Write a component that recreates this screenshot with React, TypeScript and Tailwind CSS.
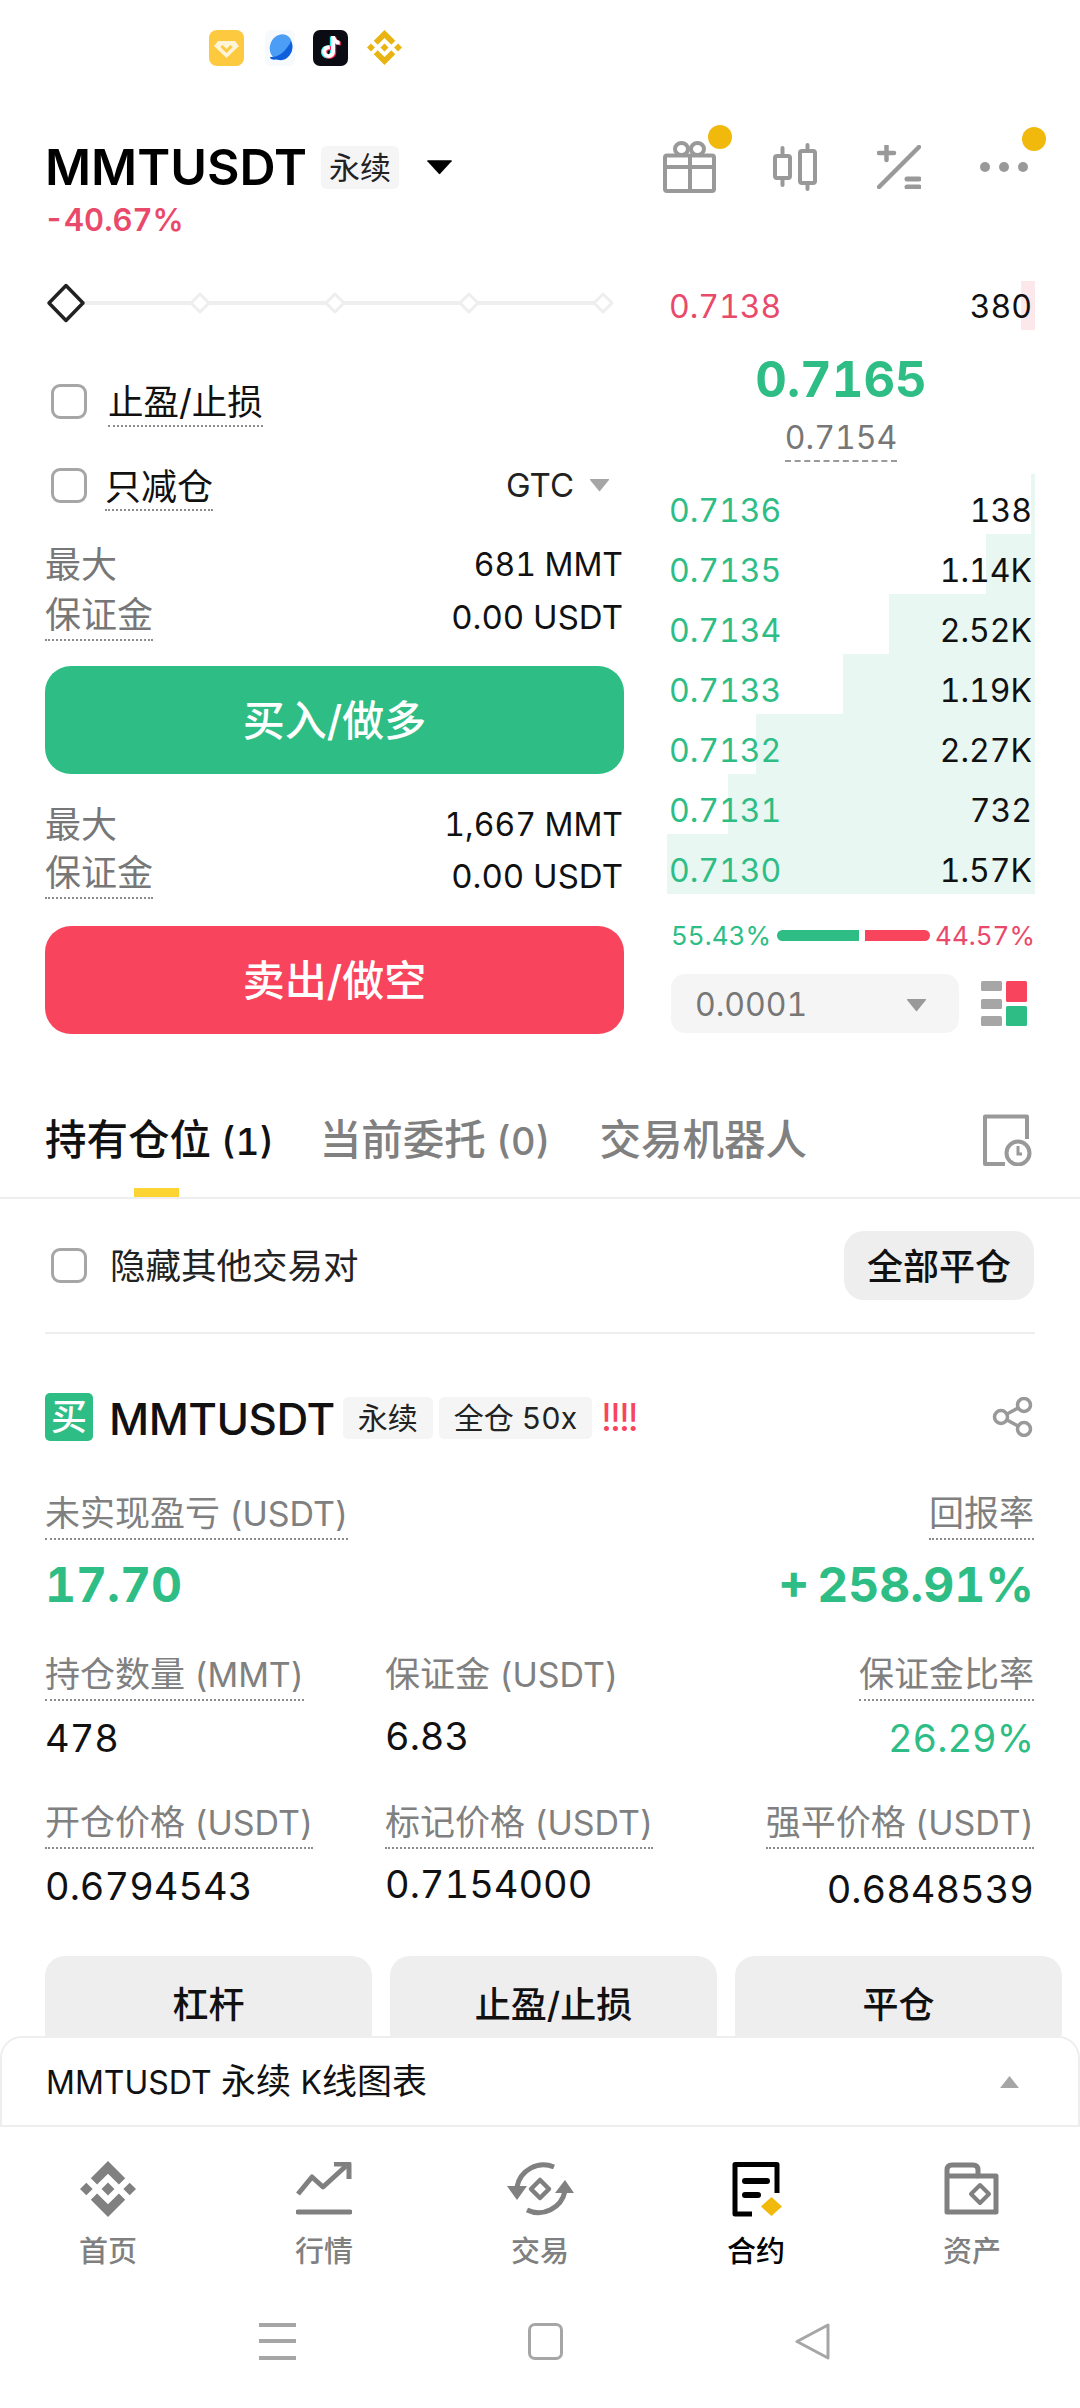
import type { ReactNode } from 'react'

const BOOK = [
  { price: '0.7136', size: '138', depth: 4 },
  { price: '0.7135', size: '1.14K', depth: 49 },
  { price: '0.7134', size: '2.52K', depth: 146 },
  { price: '0.7133', size: '1.19K', depth: 192 },
  { price: '0.7132', size: '2.27K', depth: 279 },
  { price: '0.7131', size: '732', depth: 307 },
  { price: '0.7130', size: '1.57K', depth: 368 },
]

const NAV = [
  { label: '首页', icon: <HomeIcon /> },
  { label: '行情', icon: <MarketIcon /> },
  { label: '交易', icon: <TradeIcon /> },
  { label: '合约', icon: <FuturesIcon />, active: true },
  { label: '资产', icon: <WalletIcon /> },
]

function BinanceLogo({ size, color }: { size: number; color: string }) {
  return (
    <svg width={size} height={size} viewBox="0 0 126.6 126.6" fill={color}>
      <path d="m38.73 53.2 24.59-24.58 24.6 24.6 14.3-14.31L63.32 0 24.43 38.9zM0 63.31l14.3-14.31 14.31 14.31-14.31 14.3zM38.73 73.41l24.59 24.59 24.6-24.6 14.31 14.29-38.9 38.91-38.91-38.88-.02-.02zM98 63.31l14.3-14.31 14.31 14.3-14.31 14.32z" />
      <path d="m77.83 63.3-14.51-14.52-10.73 10.73-1.24 1.23-2.54 2.54 14.51 14.5 14.51-14.47z" />
    </svg>
  )
}

function HomeIcon() {
  return <BinanceLogo size={56} color="#808080" />
}

function MarketIcon() {
  return (
    <svg width="56" height="54" viewBox="296 2165 56 54" fill="none" stroke="#808080" strokeWidth="5" strokeLinejoin="round">
      <path d="M298 2197 L312 2180 L323 2190 L346 2169" />
      <path d="M334 2167 H349 V2182" />
      <path d="M298 2215 H350" strokeLinecap="round" />
    </svg>
  )
}

function TradeIcon() {
  return (
    <svg width="68" height="56" viewBox="506 2162 68 56" fill="none" stroke="#808080" strokeWidth="5">
      <path d="M554 2168 A27 27 0 0 0 517 2188" />
      <path d="M527 2211 A27 27 0 0 0 565 2192" />
      <path d="M507 2187 H527 L517 2201 Z" fill="#808080" stroke="none" />
      <path d="M555 2194 H574 L565 2181 Z" fill="#808080" stroke="none" />
      <path d="M540 2181 L549 2190 L540 2199 L531 2190 Z" strokeWidth="4.5" strokeLinejoin="round" />
    </svg>
  )
}

function FuturesIcon() {
  return (
    <svg width="51" height="56" viewBox="731 2162 51 56" fill="none" stroke="#000">
      <path d="M777 2194 V2165.5 H735 V2215 H752" strokeWidth="5" strokeLinejoin="round" />
      <path d="M745 2182 H767 M745 2196 H758" strokeWidth="6" strokeLinecap="round" />
      <path d="M771.5 2198 L782 2207.5 L771.5 2217 L761 2207.5 Z" fill="#f0b90b" stroke="none" />
    </svg>
  )
}

function WalletIcon() {
  return (
    <svg width="56" height="54" viewBox="945 2164 56 54" fill="none" stroke="#808080" strokeWidth="5" strokeLinejoin="round">
      <path d="M948 2214 V2172 Q948 2167 953 2167 H974 Q979 2167 979 2172 V2178 H997 V2214 Z" />
      <path d="M948 2178 H979" />
      <path d="M981 2187 L990 2196 L981 2205 L972 2196 Z" strokeWidth="4" />
    </svg>
  )
}

function Triangle({ w, h, color, up }: { w: number; h: number; color: string; up?: boolean }) {
  return (
    <svg width={w} height={h} viewBox="0 0 20 14" preserveAspectRatio="none" fill={color}>
      <path d={up ? 'M10 1 L19 13 H1 Z' : 'M1.5 1 H18.5 Q19.5 1 19 2 L10.5 13 Q10 13.5 9.5 13 L1 2 Q.5 1 1.5 1 Z'} />
    </svg>
  )
}

function Checkbox() {
  return <span className="block w-[36px] h-[35px] shrink-0 rounded-[9px] border-[3px] border-[#a6a6a6]" />
}

function Dotted({ children, className = '' }: { children: ReactNode; className?: string }) {
  return <span className={`inline-block border-b-2 border-dotted border-[#8c8c8c] ${className}`}>{children}</span>
}

function Tag({ children }: { children: ReactNode }) {
  return (
    <span className="flex items-center h-[42px] px-[15px] rounded-[5px] bg-[#f5f5f5] text-[30px] leading-none text-[#222]">
      {children}
    </span>
  )
}

function MaxRow({ max, first }: { max: string; first?: boolean }) {
  return (
    <div className={first ? 'mt-[25px]' : 'mt-[26px]'}>
      <div className="flex justify-between items-center h-[50px] text-[36px] text-[#777]">
        <span>最大</span>
        <span className="text-[32px] text-[#111] pr-[1px]">{max}</span>
      </div>
      <div className={`flex justify-between items-start h-[50px] ${first ? 'mt-[2px]' : ''}`}>
        <Dotted className="text-[36px] leading-[46px] h-[49px] text-[#777]">保证金</Dotted>
        <span className={`text-[33px] text-[#111] pr-[1px] ${first ? 'leading-[50px]' : 'leading-[52px]'}`}>0.00 USDT</span>
      </div>
    </div>
  )
}

function Label({ text, unit }: { text: string; unit?: string }) {
  return (
    <>
      {text}
      {unit && <span className="text-[34px]"> {unit}</span>}
    </>
  )
}

function Stat({
  label,
  unit,
  value,
  right,
  plain,
  valueClass = 'text-[#111]',
  offset = 0,
}: {
  label: string
  unit?: string
  value: string
  right?: boolean
  plain?: boolean
  valueClass?: string
  offset?: number
}) {
  return (
    <div className={`flex flex-col ${right ? 'items-end' : 'items-start'}`}>
      {plain ? (
        <span className="text-[35px] leading-[46px] h-[50px] text-[#808080]">
          <Label text={label} unit={unit} />
        </span>
      ) : (
        <Dotted className="text-[35px] leading-[46px] h-[50px] text-[#808080]">
          <Label text={label} unit={unit} />
        </Dotted>
      )}
      <span className={`text-[38px] leading-[50px] ${valueClass} ${offset === -2 ? 'mt-[10px]' : offset === 3 ? 'mt-[15px]' : 'mt-[12px]'}`}>
        {value}
      </span>
    </div>
  )
}

export default function App() {
  return (
    <div className="w-[1080px] h-[2408px] flex flex-col overflow-hidden bg-white text-black tabular-nums font-['Inter','Noto_Sans_CJK_SC',sans-serif]">
      <div className="flex-1 min-h-0 overflow-hidden">
        {/* Status bar */}
        <div className="h-[90px] pl-[209px] pt-[30px] flex items-start">
          <svg width="35" height="36" viewBox="0 0 35 36">
            <rect width="35" height="36" rx="8" fill="#fdc93f" />
            <path d="M9 11 H26 L30 16 L17.5 28 L5 16 Z" fill="#fff4d6" />
            <path d="M12.5 16 L17.5 21 L22.5 16" fill="none" stroke="#fdc93f" strokeWidth="3" />
          </svg>
          <svg className="ml-[21px]" width="30" height="36" viewBox="0 0 30 36">
            <rect width="30" height="36" rx="6" fill="#f7fafd" />
            <ellipse cx="16" cy="17" rx="11" ry="13" fill="#4c9df5" transform="rotate(20 16 17)" />
            <path d="M26 11 A12 13 0 0 1 12 29.5 C7 30 5 29 5 27 C14 28 22 20 26 11 Z" fill="#0f5fdc" />
          </svg>
          <svg className="ml-[18px]" width="35" height="36" viewBox="0 0 35 36">
            <rect width="35" height="36" rx="7" fill="#0b0b14" />
            <g transform="translate(-1.2 .4)" fill="#25f4ee">
              <path d="M18 6h4c.3 2.6 2 4.4 4.6 4.7v4c-1.8 0-3.3-.5-4.6-1.4v8.2c0 4-3 6.5-6.3 6.5-3.7 0-6.5-2.9-6.5-6.4 0-3.9 3.3-6.9 7.6-6.3v4.1c-1.9-.5-3.6.6-3.6 2.3 0 1.5 1.2 2.5 2.5 2.5 1.5 0 2.4-1.1 2.4-2.6z" />
            </g>
            <g transform="translate(1.2 .8)" fill="#fe2c55">
              <path d="M18 6h4c.3 2.6 2 4.4 4.6 4.7v4c-1.8 0-3.3-.5-4.6-1.4v8.2c0 4-3 6.5-6.3 6.5-3.7 0-6.5-2.9-6.5-6.4 0-3.9 3.3-6.9 7.6-6.3v4.1c-1.9-.5-3.6.6-3.6 2.3 0 1.5 1.2 2.5 2.5 2.5 1.5 0 2.4-1.1 2.4-2.6z" />
            </g>
            <path fill="#fff" d="M18 6h4c.3 2.6 2 4.4 4.6 4.7v4c-1.8 0-3.3-.5-4.6-1.4v8.2c0 4-3 6.5-6.3 6.5-3.7 0-6.5-2.9-6.5-6.4 0-3.9 3.3-6.9 7.6-6.3v4.1c-1.9-.5-3.6.6-3.6 2.3 0 1.5 1.2 2.5 2.5 2.5 1.5 0 2.4-1.1 2.4-2.6z" />
          </svg>
          <span className="ml-[19px]">
            <BinanceLogo size={35} color="#e9b411" />
          </span>
        </div>

        {/* Symbol header */}
        <div className="mt-[40px] px-[45px] flex justify-between h-[106px]">
          <div>
            <div className="flex items-center h-[74px]">
              <span className="text-[50px] leading-none font-semibold">MMTUSDT</span>
              <span className="ml-[14px] flex items-center h-[43px] px-[8px] rounded-[6px] bg-[#f5f5f5] text-[31px] leading-none text-[#222]">永续</span>
              <span className="ml-[27px] flex">
                <Triangle w={27} h={16} color="#000" />
              </span>
            </div>
            <div className="h-[32px] text-[31px] leading-[32px] font-semibold text-[#e9496a] ml-[-1px]">-40.67%</div>
          </div>
          <div className="flex items-center h-[74px] pr-[7px]">
            <div className="relative">
              <svg className="block" width="53" height="52" viewBox="663 141 53 52" fill="none" stroke="#999" strokeWidth="4" strokeLinejoin="round">
                <rect x="665" y="155.5" width="49" height="35.5" rx="2" />
                <path d="M665 167 H714 M690 155 V191" />
                <ellipse cx="681.5" cy="149" rx="6.5" ry="6" />
                <ellipse cx="697.5" cy="149" rx="6.5" ry="6" />
              </svg>
              <span className="absolute left-[45px] top-[-16px] w-[24px] h-[24px] rounded-full bg-[#f0b90b]" />
            </div>
            <svg className="ml-[57px]" width="44" height="48" viewBox="773 143 44 48" fill="none" stroke="#999" strokeWidth="4" strokeLinecap="round">
              <rect x="775" y="156" width="15" height="22" rx="2" />
              <rect x="800" y="151" width="15" height="32" rx="2" />
              <path d="M782.5 148 V155 M782.5 179 V185 M807.5 145 V150 M807.5 184 V189" />
            </svg>
            <svg className="ml-[60px]" width="44" height="44" viewBox="878 145 44 44" fill="none" stroke="#999" strokeWidth="4.5" strokeLinecap="round">
              <path d="M880 187 L920 147" />
              <path d="M880 153 H895 M887.5 146 V160" />
              <path d="M908 179 H920 M908 187 H920" strokeWidth="5" />
            </svg>
            <div className="relative ml-[59px] flex gap-[9px]">
              <span className="w-[10px] h-[10px] rounded-full bg-[#999]" />
              <span className="w-[10px] h-[10px] rounded-full bg-[#999]" />
              <span className="w-[10px] h-[10px] rounded-full bg-[#999]" />
              <span className="absolute left-[42px] top-[-35px] w-[24px] h-[24px] rounded-full bg-[#f0b90b]" />
            </div>
          </div>
        </div>

        {/* Order form + book */}
        <div className="mt-[34px] flex items-start pl-[45px]">
          <div className="w-[579px]">
            <div className="relative flex justify-between items-center h-[66px] w-[577px] ml-[1px]">
              <span className="absolute left-[20px] right-[20px] top-[31px] h-[4px] bg-[#eeeeee]" />
              <span className="relative flex justify-center w-[40px]">
                <svg width="40" height="40" viewBox="0 0 40 40" fill="#fff" stroke="#222" strokeWidth="3.5" strokeLinejoin="round">
                  <path d="M20 2.5 L37 20 L20 37.5 L3 20 Z" />
                </svg>
              </span>
              {[0, 1, 2, 3].map((i) => (
                <span key={i} className="relative flex justify-center w-[40px]">
                  <svg width="22" height="22" viewBox="0 0 22 22" fill="#fff" stroke="#eeeeee" strokeWidth="3" strokeLinejoin="round">
                    <path d="M11 2 L20 11 L11 20 L2 11 Z" />
                  </svg>
                </span>
              ))}
            </div>

            <div className="mt-[35px] flex items-center h-[60px] pl-[6px]">
              <Checkbox />
              <Dotted className="ml-[21px] mt-[5px] text-[35.5px] leading-[44px] text-[#111]">止盈/止损</Dotted>
            </div>
            <div className="mt-[24px] flex items-center h-[60px] pl-[6px]">
              <Checkbox />
              <Dotted className="ml-[18px] mt-[5px] text-[36px] leading-[44px] text-[#111]">只减仓</Dotted>
              <span className="ml-auto text-[33px] text-[#222] pt-[2px]">GTC</span>
              <span className="ml-[15px] mr-[14px] flex">
                <Triangle w={21} h={14} color="#a6a6a6" />
              </span>
            </div>

            <MaxRow max="681 MMT" first />
            <div className="mt-[24px] flex items-center justify-center h-[108px] rounded-[26px] bg-[#2ebd85] text-[42px] font-medium text-white">买入/做多</div>
            <MaxRow max="1,667 MMT" />
            <div className="mt-[26px] flex items-center justify-center h-[108px] rounded-[26px] bg-[#f8455d] text-[42px] font-medium text-white">卖出/做空</div>
          </div>

          <div className="ml-[43px] w-[368px]">
            <div className="relative mt-[11px] h-[49px] pt-[2px] flex items-center justify-between pl-[2px] pr-[3px] text-[32px]">
              <span className="absolute right-0 top-0 h-full w-[14px] bg-[#fce7ea]" />
              <span className="relative text-[#e9496a]">0.7138</span>
              <span className="relative text-[#111]">380</span>
            </div>
            <div className="mt-[20px] flex flex-col items-center w-[348px]">
              <span className="h-[60px] text-[49px] leading-[60px] font-bold text-[#2ebd85]">0.7165</span>
              <span className="mt-[6px] inline-block h-[46px] text-[32px] leading-[44px] text-[#777] border-b-2 border-dashed border-[#999]">0.7154</span>
            </div>
            <div className="mt-[12px]">
              {BOOK.map((row) => (
                <div key={row.price} className="relative h-[60px] pt-[14px] flex items-center justify-between pl-[2px] pr-[3px] text-[32px]">
                  <span className="absolute right-0 top-0 h-full bg-[#e8f7f2]" style={{ width: row.depth }} />
                  <span className="relative text-[#2ebd85]">{row.price}</span>
                  <span className="relative text-[#111]">{row.size}</span>
                </div>
              ))}
            </div>
            <div className="mt-[20px] h-[42px] flex items-center pl-[4px] text-[26px]">
              <span className="text-[#2ebd85] w-[106px]">55.43%</span>
              <span className="w-[82px] h-[11px] rounded-l-full bg-[#2ebd85]" />
              <span className="ml-[6px] w-[65px] h-[11px] rounded-r-full bg-[#f8455d]" />
              <span className="ml-auto text-[#e9496a]">44.57%</span>
            </div>
            <div className="mt-[18px] flex items-center pl-[4px]">
              <div className="w-[288px] h-[59px] rounded-[14px] bg-[#f5f5f5] pl-[24px] pr-[32px] pt-[2px] flex items-center justify-between text-[32px] text-[#777]">
                <span>0.0001</span>
                <Triangle w={21} h={14} color="#999" />
              </div>
              <svg className="ml-[22px]" width="46" height="46" viewBox="0 0 46 46">
                <rect y="0" width="21" height="10" rx="1.5" fill="#a6a6a6" />
                <rect y="18" width="21" height="10" rx="1.5" fill="#a6a6a6" />
                <rect y="35" width="21" height="10" rx="1.5" fill="#a6a6a6" />
                <rect x="25" y="0" width="21" height="21" rx="1.5" fill="#f8455d" />
                <rect x="25" y="25" width="21" height="20" rx="1.5" fill="#2ebd85" />
              </svg>
            </div>
          </div>
        </div>

        {/* Tabs */}
        <div className="relative mt-[66px] h-[99px] pb-[17px] pl-[45px] pr-[47px] flex items-center border-b-2 border-[#eeeeee] text-[41.5px] font-medium text-[#808080]">
          <span className="text-[#111]">
            持有仓位<span className="text-[37px]"> (1)</span>
          </span>
          <span className="ml-[46px]">
            当前委托<span className="text-[38px]"> (0)</span>
          </span>
          <span className="ml-[49px]">交易机器人</span>
          <svg className="ml-auto mt-[-1px]" width="51" height="52" viewBox="982 1113 51 52" fill="none" stroke="#999" strokeWidth="4">
            <path d="M1005 1163 H985 V1115.5 H1027 V1138" strokeLinejoin="round" />
            <circle cx="1018" cy="1152" r="11.5" />
            <path d="M1018 1145 V1153 H1022" strokeWidth="3" />
          </svg>
          <span className="absolute left-[134px] bottom-0 w-[45px] h-[9px] bg-[#fcd535]" />
        </div>

        {/* Position filter */}
        <div className="mt-[32px] px-[46px] flex items-center h-[69px]">
          <span className="ml-[5px]">
            <Checkbox />
          </span>
          <span className="ml-[23px] pt-[3px] text-[35.5px] text-[#222]">隐藏其他交易对</span>
          <span className="ml-auto pt-[3px] flex items-center justify-center w-[190px] h-[69px] rounded-[20px] bg-[#eeeeee] text-[36px] font-medium text-[#111]">全部平仓</span>
        </div>
        <div className="mt-[32px] mx-[45px] h-[2px] bg-[#eeeeee]" />

        {/* Position card */}
        <div className="mt-[59px] pl-[45px] pr-[46px] flex items-center h-[48px]">
          <span className="flex items-center justify-center w-[48px] h-[48px] rounded-[5px] bg-[#2ebd85] text-[36px] leading-none font-medium text-white">买</span>
          <span className="ml-[16px] pt-[3px] text-[44px] font-medium tracking-[-0.5px] text-[#111]">MMTUSDT</span>
          <span className="ml-[8px] mt-[2px]">
            <Tag>永续</Tag>
          </span>
          <span className="ml-[6px] mt-[2px]">
            <Tag>全仓 50x</Tag>
          </span>
          <span className="ml-[9px] text-[38px] tracking-[-2px] text-[#f8455d]">!!!!</span>
          <svg className="ml-auto" width="42" height="40" viewBox="0 0 42 40" fill="none" stroke="#999" strokeWidth="3.5">
            <circle cx="32" cy="8" r="6.5" />
            <circle cx="9" cy="20" r="6.5" />
            <circle cx="32" cy="32" r="6.5" />
            <path d="M15 17 L26 11 M15 23 L26 29" />
          </svg>
        </div>

        <div className="mt-[49px] pl-[45px] pr-[46px]">
          <div className="flex justify-between">
            <Dotted className="text-[35px] leading-[46px] h-[50px] text-[#808080]">
              <Label text="未实现盈亏" unit="(USDT)" />
            </Dotted>
            <Dotted className="text-[35px] leading-[46px] h-[50px] text-[#808080]">回报率</Dotted>
          </div>
          <div className="mt-[15px] flex justify-between h-[60px] text-[48px] leading-[60px] font-bold text-[#2ebd85]">
            <span>17.70</span>
            <span className="[word-spacing:-5px]">+ 258.91%</span>
          </div>
          <div className="mt-[36px] grid grid-cols-[340px_1fr_auto]">
            <Stat label="持仓数量" unit="(MMT)" value="478" />
            <Stat label="保证金" unit="(USDT)" value="6.83" plain offset={-2} />
            <Stat label="保证金比率" value="26.29%" right valueClass="text-[#2ebd85]" />
          </div>
          <div className="mt-[36px] grid grid-cols-[340px_1fr_auto]">
            <Stat label="开仓价格" unit="(USDT)" value="0.6794543" />
            <Stat label="标记价格" unit="(USDT)" value="0.7154000" offset={-2} />
            <Stat label="强平价格" unit="(USDT)" value="0.6848539" right offset={3} />
          </div>
        </div>

        <div className="mt-[42px] pl-[45px] flex gap-[18px]">
          {['杠杆', '止盈/止损', '平仓'].map((label) => (
            <div key={label} className="w-[327px] h-[96px] pt-[2px] rounded-[20px] bg-[#eeeeee] flex items-center justify-center text-[36px] font-medium text-[#111]">
              {label}
            </div>
          ))}
        </div>
      </div>

      {/* Chart drawer */}
      <div className="h-[91px] shrink-0 pl-[44px] pr-[58px] flex items-center justify-between rounded-t-[22px] border-2 border-[#eeeeee] bg-white">
        <span className="text-[35px] text-[#111]">
          <span className="text-[32px]">MMTUSDT</span> 永续 <span className="text-[32px]">K</span>线图表
        </span>
        <Triangle w={21} h={14} color="#a6a6a6" up />
      </div>

      {/* Bottom nav */}
      <div className="h-[162px] shrink-0 pt-[33px] grid grid-cols-5">
        {NAV.map((item) => (
          <div key={item.label} className="flex flex-col items-center">
            <span className="flex items-center h-[58px]">{item.icon}</span>
            <span className={`mt-[14px] text-[29px] leading-[40px] font-medium ${item.active ? 'text-black' : 'text-[#808080]'}`}>
              {item.label}
            </span>
          </div>
        ))}
      </div>

      {/* System nav */}
      <div className="h-[119px] shrink-0 pt-[34px] flex items-start">
        <svg className="ml-[259px]" width="37" height="37" viewBox="0 0 37 37" fill="#a6a6a6">
          <rect width="37" height="4" />
          <rect y="16" width="37" height="4" />
          <rect y="33" width="37" height="4" />
        </svg>
        <span className="ml-[232px] block w-[35px] h-[37px] rounded-[7px] border-[3px] border-[#a6a6a6]" />
        <svg className="ml-[232px]" width="36" height="37" viewBox="0 0 36 37" fill="none" stroke="#a6a6a6" strokeWidth="3" strokeLinejoin="round">
          <path d="M33 2 V35 L2 18.5 Z" />
        </svg>
      </div>
    </div>
  )
}
